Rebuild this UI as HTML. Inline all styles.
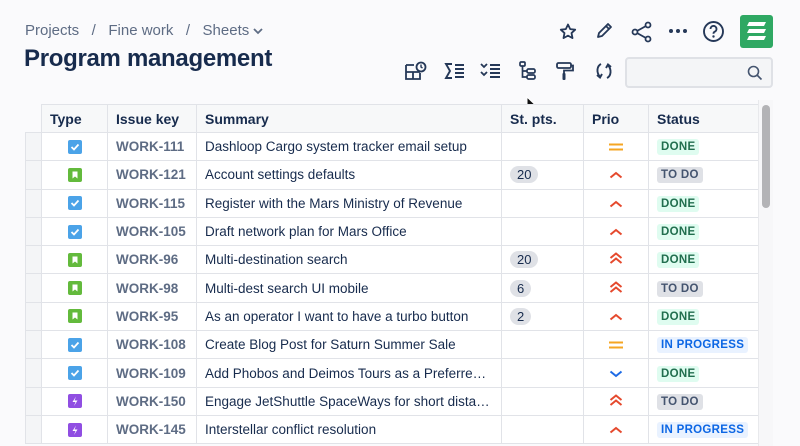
<!DOCTYPE html>
<html><head><meta charset="utf-8"><style>
*{box-sizing:border-box;margin:0;padding:0}
body{width:800px;height:446px;overflow:hidden;background:#fafafc;font-family:"Liberation Sans",sans-serif;color:#172b4d;position:relative}
.abs{position:absolute}
.crumb{left:25px;top:22px;font-size:15px;color:#5e6c84;white-space:nowrap}
.title{left:24px;top:45px;font-size:24px;font-weight:bold;color:#172b4d;letter-spacing:-0.3px}
.ic{position:absolute}
.search{left:625px;top:57px;width:148px;height:31px;border:2px solid #dfe1e6;border-radius:4px;background:#f4f5f7}
table{position:absolute;left:25px;top:104px;border-collapse:collapse;font-size:13.5px}
td,th{border:1px solid #e1e3e8;height:28.3px;padding:0 8px;white-space:nowrap;background:#fff;text-align:left}
th{background:#f7f8f9;font-weight:bold;font-size:14px;height:28px}
th.g{background:transparent;border:none;border-right:1px solid #e1e3e8}
td.g{background:#f4f5f7;width:16px;padding:0}
.key{color:#5e6c84;font-weight:bold;font-size:13.5px}
.t{display:block;margin:0 auto;width:14px;height:14px;border-radius:2px;position:relative}
.tk{background:#4ba3e8}.st{background:#63ba3c}.ep{background:#904ee2}
.lz{display:inline-block;font-size:11.5px;font-weight:bold;padding:2px 4px;border-radius:3px;letter-spacing:.3px}
.done{background:#dffcf0;color:#216e4e}.todo{background:#dfe1e6;color:#44546f}.ip{background:#e9f2ff;color:#0c66e4}
.pts{display:inline-block;background:#dfe1e6;border-radius:9px;padding:1px 7px;font-size:13px}
.pr{text-align:center}
</style></head><body>
<div class="abs crumb">Projects&nbsp;&nbsp;&nbsp;/&nbsp;&nbsp;&nbsp;Fine work&nbsp;&nbsp;&nbsp;/&nbsp;&nbsp;&nbsp;Sheets <svg width="10" height="8" viewBox="0 0 10 8"><path d="M1 2l4 4 4-4" stroke="#5e6c84" stroke-width="1.8" fill="none"/></svg></div>
<div class="abs title">Program management</div>

<svg class="ic" style="left:558px;top:22px" width="20" height="20" viewBox="0 0 20 20"><path d="M10 2.5l2.2 4.6 5 .6-3.7 3.4 1 5-4.5-2.5-4.5 2.5 1-5L2.8 7.7l5-.6z" fill="none" stroke="#253858" stroke-width="1.8" stroke-linejoin="round"/></svg>
<svg class="ic" style="left:594px;top:21px" width="20" height="20" viewBox="0 0 20 20"><path d="M4 16l1-4 9-9 3 3-9 9zM12 5l3 3" fill="none" stroke="#253858" stroke-width="1.8" stroke-linejoin="round"/></svg>
<svg class="ic" style="left:631px;top:21px" width="22" height="22" viewBox="0 0 22 22"><circle cx="4" cy="11" r="2.5" fill="none" stroke="#253858" stroke-width="1.8"/><circle cx="17" cy="4" r="2.5" fill="none" stroke="#253858" stroke-width="1.8"/><circle cx="17" cy="18" r="2.5" fill="none" stroke="#253858" stroke-width="1.8"/><path d="M6 10l9-5M6 12l9 5" stroke="#253858" stroke-width="1.8"/></svg>
<svg class="ic" style="left:668px;top:28px" width="20" height="6"><circle cx="3" cy="3" r="2" fill="#253858"/><circle cx="10" cy="3" r="2" fill="#253858"/><circle cx="17" cy="3" r="2" fill="#253858"/></svg>
<svg class="ic" style="left:702px;top:20px" width="23" height="23" viewBox="0 0 23 23"><circle cx="11.5" cy="11.5" r="9.5" fill="none" stroke="#253858" stroke-width="1.9"/><path d="M8.5 9a3 3 0 1 1 4 2.8c-.8.4-1 1-1 2" fill="none" stroke="#253858" stroke-width="1.9"/><circle cx="11.5" cy="16.5" r="1.2" fill="#253858"/></svg>
<svg class="ic" style="left:740px;top:15px" width="33" height="33" viewBox="0 0 33 33"><rect width="33" height="33" rx="3" fill="#2fa863"/><path d="M9 7h17l-2 4H7zM9 14h17l-2 4H7zM9 21h17l-2 4H7z" fill="#fff"/></svg>

<svg class="ic" style="left:404px;top:61px" width="24" height="20" viewBox="0 0 24 20"><path d="M2 4h8M2 4v14h14v-6M2 11h14M9 11v7" fill="none" stroke="#253858" stroke-width="1.8"/><circle cx="17" cy="6" r="4.5" fill="none" stroke="#253858" stroke-width="1.8"/><path d="M17 3.5v2.5l1.5 1" stroke="#253858" stroke-width="1.4" fill="none"/></svg>
<svg class="ic" style="left:444px;top:62px" width="22" height="18" viewBox="0 0 22 18"><path d="M8 2H2l4 7-4 7h6" fill="none" stroke="#253858" stroke-width="1.9"/><path d="M11 3h9M11 7h9M11 11h9M11 15h9" stroke="#253858" stroke-width="1.9"/></svg>
<svg class="ic" style="left:480px;top:62px" width="22" height="18" viewBox="0 0 22 18"><path d="M1 2l3 3 3-3M1 10l3 3 3-3" fill="none" stroke="#253858" stroke-width="1.8"/><path d="M10 3h10M10 7h10M10 11h10M10 15h10" stroke="#253858" stroke-width="1.9"/></svg>
<svg class="ic" style="left:519px;top:61px" width="18" height="20" viewBox="0 0 18 20"><rect x="1" y="1" width="5" height="4" rx="1" fill="none" stroke="#253858" stroke-width="1.7"/><path d="M3.5 5v11h4M3.5 10h4" fill="none" stroke="#253858" stroke-width="1.7"/><rect x="8" y="8" width="8" height="4" rx="1.5" fill="none" stroke="#253858" stroke-width="1.7"/><rect x="8" y="14" width="8" height="4" rx="1.5" fill="none" stroke="#253858" stroke-width="1.7"/></svg>
<svg class="ic" style="left:555px;top:61px" width="20" height="20" viewBox="0 0 20 20"><rect x="2" y="2" width="14" height="5" rx="1.5" fill="none" stroke="#253858" stroke-width="1.8"/><path d="M16 4.5h2v5h-9v3" fill="none" stroke="#253858" stroke-width="1.8"/><rect x="7.5" y="12" width="3" height="7" rx="1" fill="#253858"/></svg>
<svg class="ic" style="left:594px;top:61px" width="20" height="20" viewBox="0 0 20 20"><path d="M7 3C3 5 2 11 6 16M13 17c4-2 5-8 1-13" fill="none" stroke="#253858" stroke-width="1.9"/><path d="M3 14l3 2.5L8 13M17 6l-3-2.5L12 7" fill="none" stroke="#253858" stroke-width="1.9"/></svg>

<div class="abs search"><svg style="position:absolute;right:8px;top:6px" width="16" height="16" viewBox="0 0 16 16"><circle cx="6.5" cy="6.5" r="5" fill="none" stroke="#44546f" stroke-width="1.6"/><path d="M10 10l4.5 4.5" stroke="#44546f" stroke-width="1.6"/></svg></div>

<svg class="ic" style="left:526px;top:96px" width="12" height="18" viewBox="0 0 12 18"><path d="M1 1v14l3.5-3.5 2.5 5 2-1-2.5-5H11z" fill="#111" stroke="#fff" stroke-width="1"/></svg>

<table>
<tr><th class="g" style="width:16px;padding:0"></th><th style="width:66px">Type</th><th style="width:89px">Issue key</th><th style="width:305px">Summary</th><th style="width:82px">St. pts.</th><th style="width:65px">Prio</th><th style="width:110px">Status</th></tr>
<tr><td class="g"></td><td><span class="t tk"><svg width="14" height="14"><path d="M3.5 7l2.5 2.5 4.5-5" stroke="#fff" stroke-width="1.8" fill="none"/></svg></span></td><td class="key">WORK-111</td><td>Dashloop Cargo system tracker email setup</td><td></td><td class="pr"><svg width="14" height="8"><path d="M0 1.5h14M0 6.5h14" stroke="#f5a623" stroke-width="2"/></svg></td><td><span class="lz done">DONE</span></td></tr>
<tr><td class="g"></td><td><span class="t st"><svg width="14" height="14"><path d="M4.5 3.5h5v7l-2.5-2-2.5 2z" fill="#fff"/></svg></span></td><td class="key">WORK-121</td><td>Account settings defaults</td><td><span class="pts">20</span></td><td class="pr"><svg width="14" height="8"><path d="M1.5 6.5l5.5-4.5 5.5 4.5" stroke="#e5492d" stroke-width="2" fill="none"/></svg></td><td><span class="lz todo">TO DO</span></td></tr>
<tr><td class="g"></td><td><span class="t tk"><svg width="14" height="14"><path d="M3.5 7l2.5 2.5 4.5-5" stroke="#fff" stroke-width="1.8" fill="none"/></svg></span></td><td class="key">WORK-115</td><td>Register with the Mars Ministry of Revenue</td><td></td><td class="pr"><svg width="14" height="8"><path d="M1.5 6.5l5.5-4.5 5.5 4.5" stroke="#e5492d" stroke-width="2" fill="none"/></svg></td><td><span class="lz done">DONE</span></td></tr>
<tr><td class="g"></td><td><span class="t tk"><svg width="14" height="14"><path d="M3.5 7l2.5 2.5 4.5-5" stroke="#fff" stroke-width="1.8" fill="none"/></svg></span></td><td class="key">WORK-105</td><td>Draft network plan for Mars Office</td><td></td><td class="pr"><svg width="14" height="8"><path d="M1.5 6.5l5.5-4.5 5.5 4.5" stroke="#e5492d" stroke-width="2" fill="none"/></svg></td><td><span class="lz done">DONE</span></td></tr>
<tr><td class="g"></td><td><span class="t st"><svg width="14" height="14"><path d="M4.5 3.5h5v7l-2.5-2-2.5 2z" fill="#fff"/></svg></span></td><td class="key">WORK-96</td><td>Multi-destination search</td><td><span class="pts">20</span></td><td class="pr"><svg width="14" height="12"><path d="M1.5 6l5.5-4.5 5.5 4.5M1.5 11l5.5-4.5 5.5 4.5" stroke="#e5492d" stroke-width="2" fill="none"/></svg></td><td><span class="lz done">DONE</span></td></tr>
<tr><td class="g"></td><td><span class="t st"><svg width="14" height="14"><path d="M4.5 3.5h5v7l-2.5-2-2.5 2z" fill="#fff"/></svg></span></td><td class="key">WORK-98</td><td>Multi-dest search UI mobile</td><td><span class="pts">6</span></td><td class="pr"><svg width="14" height="12"><path d="M1.5 6l5.5-4.5 5.5 4.5M1.5 11l5.5-4.5 5.5 4.5" stroke="#e5492d" stroke-width="2" fill="none"/></svg></td><td><span class="lz todo">TO DO</span></td></tr>
<tr><td class="g"></td><td><span class="t st"><svg width="14" height="14"><path d="M4.5 3.5h5v7l-2.5-2-2.5 2z" fill="#fff"/></svg></span></td><td class="key">WORK-95</td><td>As an operator I want to have a turbo button</td><td><span class="pts">2</span></td><td class="pr"><svg width="14" height="8"><path d="M1.5 6.5l5.5-4.5 5.5 4.5" stroke="#e5492d" stroke-width="2" fill="none"/></svg></td><td><span class="lz done">DONE</span></td></tr>
<tr><td class="g"></td><td><span class="t tk"><svg width="14" height="14"><path d="M3.5 7l2.5 2.5 4.5-5" stroke="#fff" stroke-width="1.8" fill="none"/></svg></span></td><td class="key">WORK-108</td><td>Create Blog Post for Saturn Summer Sale</td><td></td><td class="pr"><svg width="14" height="8"><path d="M0 1.5h14M0 6.5h14" stroke="#f5a623" stroke-width="2"/></svg></td><td><span class="lz ip">IN PROGRESS</span></td></tr>
<tr><td class="g"></td><td><span class="t tk"><svg width="14" height="14"><path d="M3.5 7l2.5 2.5 4.5-5" stroke="#fff" stroke-width="1.8" fill="none"/></svg></span></td><td class="key">WORK-109</td><td>Add Phobos and Deimos Tours as a Preferre…</td><td></td><td class="pr"><svg width="14" height="8"><path d="M1.5 1.5l5.5 4.5 5.5-4.5" stroke="#1d6ae5" stroke-width="2" fill="none"/></svg></td><td><span class="lz done">DONE</span></td></tr>
<tr><td class="g"></td><td><span class="t ep"><svg width="14" height="14"><path d="M8 2.5L4.5 8h3l-1.5 4 3.5-5.5h-3z" fill="#fff"/></svg></span></td><td class="key">WORK-150</td><td>Engage JetShuttle SpaceWays for short dista…</td><td></td><td class="pr"><svg width="14" height="12"><path d="M1.5 6l5.5-4.5 5.5 4.5M1.5 11l5.5-4.5 5.5 4.5" stroke="#e5492d" stroke-width="2" fill="none"/></svg></td><td><span class="lz todo">TO DO</span></td></tr>
<tr><td class="g"></td><td><span class="t ep"><svg width="14" height="14"><path d="M8 2.5L4.5 8h3l-1.5 4 3.5-5.5h-3z" fill="#fff"/></svg></span></td><td class="key">WORK-145</td><td>Interstellar conflict resolution</td><td></td><td class="pr"><svg width="14" height="8"><path d="M1.5 6.5l5.5-4.5 5.5 4.5" stroke="#e5492d" stroke-width="2" fill="none"/></svg></td><td><span class="lz ip">IN PROGRESS</span></td></tr>
</table>
<div class="abs" style="left:758px;top:100px;width:15px;height:346px;background:#f7f7f9;border-left:1px solid #e8e9ec"></div>
<div class="abs" style="left:762px;top:105px;width:8px;height:103px;border-radius:4px;background:#b3b3b6"></div>
</body></html>
